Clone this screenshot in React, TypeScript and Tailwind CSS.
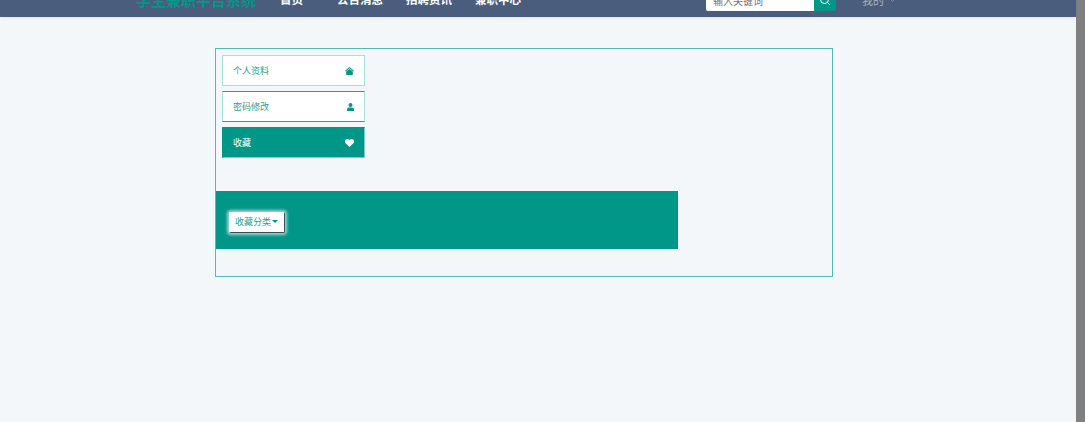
import { ChevronDown, Search } from "lucide-react";

const font = { fontFamily: '"Noto Sans CJK SC", "Noto Sans", sans-serif' };

function HomeIcon() {
	return (
		<svg width="9" height="8" viewBox="0 0 9 8" className="fill-[#009688]">
			<path d="M4.5 0 9 3.8 8.4 4.4 4.5 1.2 0.6 4.4 0 3.8ZM1.2 4.5 4.5 1.9 7.8 4.5V8H1.2Z" />
		</svg>
	);
}

function UserIcon() {
	return (
		<svg width="7" height="8" viewBox="0 0 7 8" className="fill-[#009688]">
			<circle cx="3.5" cy="2" r="2" />
			<path d="M0 8V6.6C0 5.3 1 4.6 2 4.6H5C6 4.6 7 5.3 7 6.6V8Z" />
		</svg>
	);
}

function HeartIcon() {
	return (
		<svg width="9" height="8" viewBox="0 0 9 8" className="fill-white">
			<path d="M4.5 8 0.7 4.2C-0.3 3.1-0.2 1.4 0.8 0.6 1.9-0.3 3.5-0.1 4.5 1.1 5.5-0.1 7.1-0.3 8.2 0.6 9.2 1.4 9.3 3.1 8.3 4.2Z" />
		</svg>
	);
}

export default function App() {
	return (
		<div className="flex min-h-[422px] bg-[#808080]" style={font}>
			<div className="w-[1076px] shrink-0 bg-[#f4f7fa]">
				<header className="h-[17px] overflow-hidden bg-[#4a5d7c] shadow-[0_1px_3px_rgba(0,0,0,0.08)]">
					<div className="-mt-[11px] flex h-[22px] items-center pl-[136px]">
						<span className="w-[144px] text-[15px] font-bold whitespace-nowrap text-[#009688]">学生兼职平台系统</span>
						<nav className="flex text-[11.5px] font-bold whitespace-nowrap text-white">
							<span className="w-[57px]">首页</span>
							<span className="w-[69px]">公告消息</span>
							<span className="w-[69px]">招聘资讯</span>
							<span className="w-[231px]">兼职中心</span>
						</nav>
						<div className="flex h-[22px] w-[130px]">
							<div className="flex w-[108px] items-center rounded-l-[2px] bg-white pl-[7px] text-[10px] text-[#757575]">输入关键词</div>
							<div className="flex w-[22px] items-center justify-center rounded-r-[2px] bg-[#009688]">
								<Search size={12} className="-ml-[1px] text-white" />
							</div>
						</div>
						<span className="ml-[26px] text-[11px] text-[#a9b2bf]">我的</span>
						<ChevronDown size={7} className="ml-[5px] text-[#a9b2bf]" />
					</div>
				</header>
				<main className="pt-[31px] pl-[215px]">
					<section className="h-[229px] w-[618px] border border-[#4fbdb4]">
						<div className="flex w-[149px] flex-col gap-[5px] pt-[6px] pl-[6px] text-[9px]">
							<div className="flex h-[31px] items-center justify-between border border-[#a6dfdb] bg-white pr-[10px] pl-[10px] text-[#2f9d93]">
								<span>个人资料</span>
								<HomeIcon />
							</div>
							<div className="flex h-[31px] items-center justify-between border border-[#a6dfdb] border-t-[#1fa398] border-b-[#1fa398] bg-white pr-[10px] pl-[10px] text-[#2f9d93]">
								<span>密码修改</span>
								<UserIcon />
							</div>
							<div className="flex h-[31px] items-center justify-between border border-[#80cbc4] border-t-[#009688] border-l-[#009688] bg-[#009688] pr-[10px] pl-[10px] text-white">
								<span>收藏</span>
								<HeartIcon />
							</div>
						</div>
						<div className="mt-[33px] flex h-[58px] w-[462px] items-center bg-[#009688] pl-[13px]">
							<button className="mt-[4px] flex h-[21px] w-[56px] items-center justify-center rounded-[2px] border border-white border-r-[#3f4a5a] border-b-[#3f4a5a] bg-white pr-[1px] text-[9px] text-[#2f9d93] shadow-[0_0_3px_2px_rgba(255,255,255,0.6)]">
								收藏分类
								<span className="mb-[2px] ml-[1px] border-x-[3px] border-t-[3px] border-x-transparent border-t-[#009688]" />
							</button>
						</div>
					</section>
				</main>
			</div>
		</div>
	);
}
